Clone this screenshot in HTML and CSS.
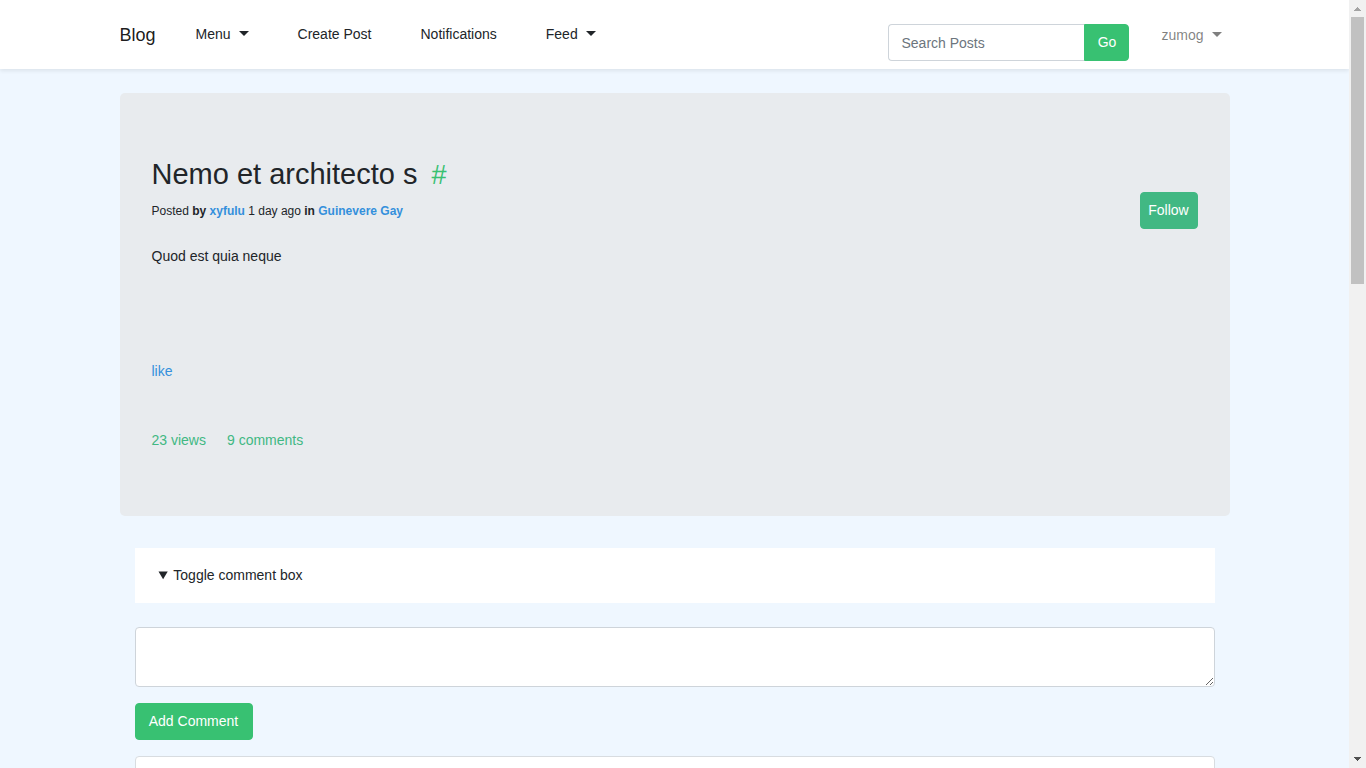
FILE: index.html
```html
<!DOCTYPE html>
<html lang="en">
<head>
<meta charset="utf-8">
<meta name="viewport" content="width=device-width, initial-scale=1">
<title>Blog</title>
<link rel="stylesheet" href="styles.css">
</head>
<body>
<div class="viewport">
  <div class="page">
    <header class="navbar">
      <div class="container navbar-inner">
        <a class="brand" href="#">Blog</a>
        <nav class="nav">
          <button class="nav-link caret" type="button">Menu</button>
          <a class="nav-link" href="#">Create Post</a>
          <a class="nav-link" href="#">Notifications</a>
          <button class="nav-link caret" type="button">Feed</button>
        </nav>
        <form class="search">
          <input class="search-input" type="text" placeholder="Search Posts" aria-label="Search Posts">
          <button class="btn search-btn" type="submit">Go</button>
        </form>
        <button class="user caret" type="button">zumog</button>
      </div>
    </header>
    <main class="container main">
      <article class="post">
        <h1 class="post-title">Nemo et architecto s <a class="hash" href="#">#</a></h1>
        <div class="post-meta">
          <p class="byline">Posted <b>by <a href="#">xyfulu</a></b> 1 day ago <b>in <a href="#">Guinevere Gay</a></b></p>
          <button class="btn follow" type="button">Follow</button>
        </div>
        <p class="post-body">Quod est quia neque</p>
        <a class="like" href="#">like</a>
        <div class="stats"><span>23 views</span><span>9 comments</span></div>
      </article>
      <section class="comments">
        <details open>
          <summary class="toggle">Toggle comment box</summary>
          <form class="comment-form">
            <textarea class="comment-text" aria-label="Comment"></textarea>
            <button class="btn add-comment" type="submit">Add Comment</button>
          </form>
        </details>
        <div class="card"></div>
      </section>
    </main>
  </div>
  <div class="scrollbar" aria-hidden="true">
    <svg class="arrow" viewBox="0 0 17 17"><path d="M8 7h1v1h1v1h1v1h1v1H5v-1h1V9h1V8h1z" fill="#a3a3a3"/></svg>
    <div class="track"><div class="thumb"></div></div>
    <svg class="arrow" viewBox="0 0 17 17"><path d="M5 6h7v1h-1v1h-1v1H9v1H8V9H7V8H6V7H5z" fill="#505050"/></svg>
  </div>
</div>
</body>
</html>
```
FILE: styles.css
```css
* { box-sizing: border-box; }

body {
  margin: 0;
  background: #eff7ff;
  color: #212529;
  font: 14px/22px "Liberation Sans", Arial, sans-serif;
}

a { color: #3490dc; text-decoration: none; }
p, h1 { margin: 0; }
button, input, textarea { font: inherit; }
button { cursor: pointer; }

.viewport { display: flex; height: 100vh; }
.page { flex: 1; min-width: 0; overflow: hidden auto; scrollbar-width: none; }
.container { width: 100%; max-width: 1110px; margin: 0 auto; }

.navbar {
  background: #fff;
  box-shadow: 0 2px 4px rgba(0, 0, 0, .08);
}
.navbar-inner { display: flex; align-items: center; min-height: 69px; }
.brand { color: rgba(0, 0, 0, .9); font-size: 18px; margin-right: 16px; }
.nav { display: flex; flex: 1; gap: 1px; }
.nav-link {
  padding: 7px 24px 9px;
  border: 0;
  background: none;
  color: #212529;
}
.caret::after {
  content: "";
  display: inline-block;
  margin-left: 8px;
  vertical-align: 3px;
  border: 5px solid transparent;
  border-top-color: currentColor;
  border-bottom: 0;
}
.search { display: flex; width: 241px; margin-top: 16px; }
.search-input {
  flex: 1;
  min-width: 0;
  height: 37px;
  padding: 6px 12px;
  border: 1px solid #ced4da;
  border-right: 0;
  border-radius: 4px 0 0 4px;
}
.search-input::placeholder { color: #6c757d; opacity: 1; }
.btn {
  height: 37px;
  padding: 6px 12px;
  border: 1px solid #38c172;
  border-radius: 4px;
  background: #38c172;
  color: #fff;
}
.search-btn { min-width: 45px; padding: 5px 12px 7px; border-radius: 0 4px 4px 0; }
.user {
  margin-left: 24px;
  padding: 8px;
  border: 0;
  background: none;
  color: rgba(0, 0, 0, .5);
}

.main { padding-top: 24px; }
.post {
  padding: 64px 32px 65px;
  border-radius: 5px;
  background: #e8ebee;
}
.post-title { font-size: 29px; line-height: 35px; font-weight: 400; }
.hash { margin-left: 6px; color: #38c172; font-size: 27px; line-height: 1; }
.post-meta { display: flex; align-items: center; justify-content: space-between; }
.byline { font-size: 12px; }
.follow { min-width: 58px; padding: 5px 7px 7px; border-color: #41b883; background: #41b883; }
.post-body { margin-top: 16px; }
.like { display: block; width: fit-content; margin-top: 93px; }
.stats { display: flex; gap: 21px; margin-top: 47px; color: #41b883; }

.comments { padding: 32px 15px 0; }
.toggle { padding: 16px 24px 17px; background: #fff; cursor: pointer; }
.comment-form { margin-top: 24px; }
.comment-text {
  display: block;
  width: 100%;
  height: 60px;
  margin-bottom: 16px;
  padding: 6px 12px;
  border: 1px solid #ced4da;
  border-radius: 4px;
  resize: vertical;
}
.add-comment { min-width: 118px; padding: 5px 12px 7px; }
.card {
  min-height: 120px;
  margin-top: 16px;
  border: 1px solid #d8dce0;
  border-radius: 4px;
  background: #fff;
}

.scrollbar { display: flex; flex-direction: column; width: 17px; background: #f1f1f1; }
.arrow { display: block; height: 17px; }
.track { flex: 1; padding: 0 2px; }
.thumb { height: 267px; background: #c1c1c1; }
```
